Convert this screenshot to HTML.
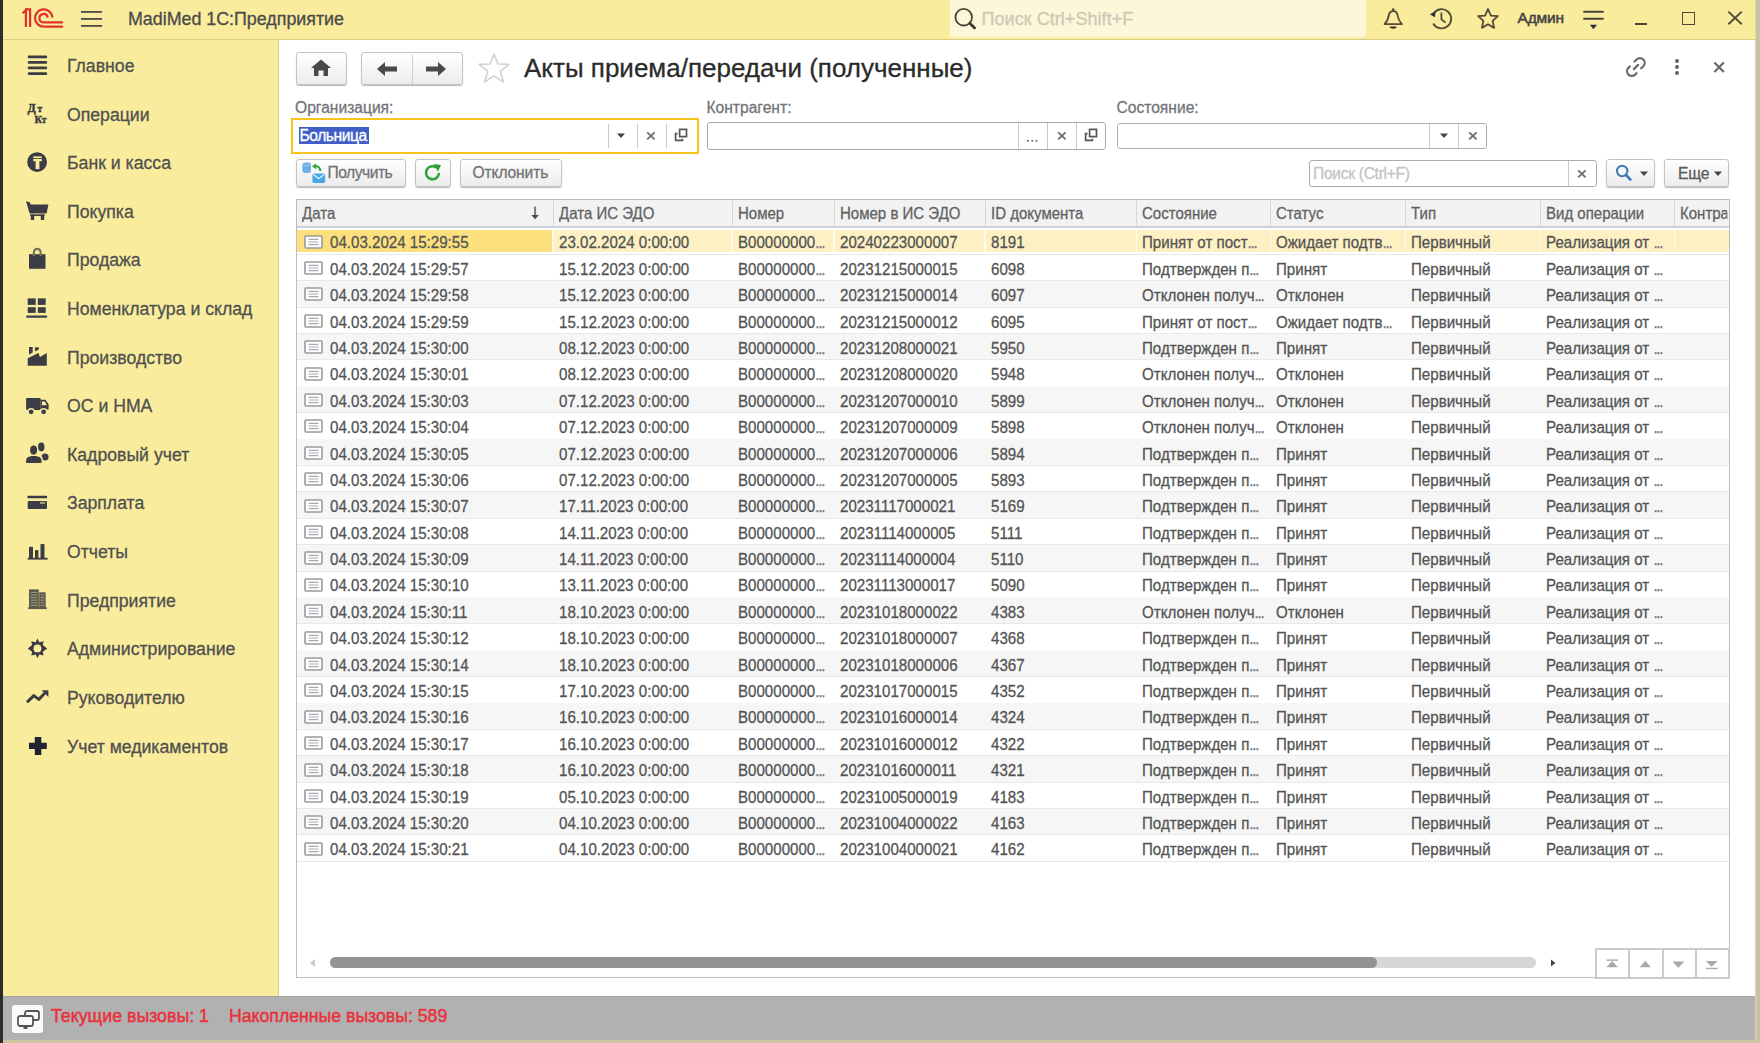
<!DOCTYPE html>
<html><head><meta charset="utf-8"><title>1C</title>
<style>
*{box-sizing:border-box;margin:0;padding:0}
html,body{width:1760px;height:1043px;overflow:hidden;background:#fff;font-family:"Liberation Sans",sans-serif;color:#4a4a4a}
.a{position:absolute}
.t{position:absolute;white-space:nowrap;line-height:1;transform-origin:0 0;-webkit-text-stroke:0.3px currentColor}
.btn{position:absolute;background:linear-gradient(#ffffff,#ececec);border:1px solid #c4c4c4;border-radius:3px;box-shadow:0 1px 1px rgba(0,0,0,0.28)}
.fld{position:absolute;background:#fff;border:1px solid #acacac;border-radius:3px}
.vs{position:absolute;top:2px;bottom:2px;width:1px;background:#c9c9c9}
</style></head><body>

<div class="a" style="left:0;top:0;width:3px;height:1043px;background:#2c2c30"></div>
<div class="a" style="left:1755px;top:0;width:5px;height:1043px;background:linear-gradient(90deg,#e6dcae 0,#cdc592 30%,#c6bfab 60%,#c7c0ae 100%)"></div>
<div class="a" style="left:3px;top:0;width:1752px;height:40px;background:#f9ec9c;border-bottom:1.5px solid #d9cd86"></div>
<svg class="a" style="left:0;top:0;overflow:visible" width="1" height="1"><g fill="none" stroke="#e2302a" stroke-width="2.2"><path d="M22.6 13.2 L25.9 10 V27.1"/><path d="M25 9.4 H30.1 V27.1"/><path d="M52.3 16.6 A8.7 8.7 0 1 0 43.9 26.7 H62.2" stroke-linecap="round"/><path d="M47.6 16.8 A4.2 4.2 0 1 0 43.4 22.4 H62.2" stroke-linecap="round"/></g></svg>
<svg class="a" style="left:81px;top:10px" width="22" height="18" viewBox="0 0 22 18"><g fill="#4b4b4b"><rect x="0" y="1" width="21" height="1.8"/><rect x="0" y="8" width="21" height="1.8"/><rect x="0" y="15" width="21" height="1.8"/></g></svg>
<div class="t" style="left:128.2px;top:9.55px;font-size:18.5px;transform:scaleX(0.964);color:#4a4a4a;">MadiMed 1С:Предприятие</div>
<div class="a" style="left:950px;top:0px;width:416px;height:37px;background:#fdf6d8;border-radius:0 0 2px 2px"></div>
<svg class="a" style="left:953px;top:6px" width="26" height="26" viewBox="0 0 26 26"><circle cx="10.7" cy="11.2" r="8.3" fill="none" stroke="#4a4739" stroke-width="1.8"/><path d="M16.8 17.3 L21.6 21.9" stroke="#3b3b33" stroke-width="2.8" stroke-linecap="round"/></svg>
<div class="t" style="left:981.5px;top:9.77px;font-size:18px;letter-spacing:0.05px;color:#cdc9b6;">Поиск Ctrl+Shift+F</div>
<svg class="a" style="left:1380px;top:2px" width="28" height="32" viewBox="0 0 28 32"><circle cx="13.2" cy="7.6" r="1.3" fill="#4f4a3a"/><path d="M4.5 22.1 C7 19.5 8.3 17 8.8 13.5 C9.2 10.5 10.5 9.2 13.2 9.2 C15.9 9.2 17.2 10.5 17.6 13.5 C18.1 17 19.4 19.5 21.9 22.1 Z" fill="none" stroke="#4f4a3a" stroke-width="1.8" stroke-linejoin="round"/><path d="M9.8 24.6 H16.6 A3.4 2.2 0 0 1 9.8 24.6 Z" fill="#3a3528"/></svg>
<svg class="a" style="left:1425px;top:0px" width="34" height="36" viewBox="0 0 34 36"><path d="M8.6 13.4 A9.6 9.6 0 1 1 8.2 23.5" fill="none" stroke="#524c3a" stroke-width="1.8"/><path d="M4.8 14.3 L10.6 11.6 L9.9 17.2 Z" fill="#2f2f3a"/><path d="M16.4 12.4 V19.3 L20.6 22.6" fill="none" stroke="#524c3a" stroke-width="1.8"/></svg>
<svg class="a" style="left:1476px;top:7px" width="24" height="24" viewBox="0 0 24 24"><path d="M12 2 L14.9 8.6 L21.8 9.2 L16.6 13.9 L18.1 20.9 L12 17.3 L5.9 20.9 L7.4 13.9 L2.2 9.2 L9.1 8.6 Z" fill="none" stroke="#4f4a3a" stroke-width="1.8" stroke-linejoin="round"/></svg>
<div class="t" style="left:1517.5px;top:10.09px;font-size:15.5px;letter-spacing:-0.2px;color:#444;-webkit-text-stroke:0.55px #444">Админ</div>
<svg class="a" style="left:1580px;top:0px" width="30" height="34" viewBox="0 0 30 34"><g stroke="#4a4536" stroke-width="1.9" stroke-linecap="round"><path d="M4 11.8H23M4 18.7H23"/></g><path d="M9.8 24.8h7.2l-3.6 4.4z" fill="#2e2e36"/></svg>
<div class="a" style="left:1634.8px;top:23.3px;width:12.6px;height:2px;background:#4f4a3a"></div>
<div class="a" style="left:1682px;top:12.3px;width:12.8px;height:12.4px;border:1.9px solid #4f4a3a"></div>
<svg class="a" style="left:1726px;top:9px" width="18" height="18" viewBox="0 0 18 18"><path d="M2.3 2.6L15.8 15.2M15.8 2.6L2.3 15.2" stroke="#4f4a3a" stroke-width="1.9"/></svg>
<div class="a" style="left:3px;top:40px;width:276px;height:956px;background:#f9ec9c;border-right:1.6px solid #dcd08a"></div>
<svg class="a" style="left:20px;top:45px" width="40" height="40" viewBox="0 0 40 40"><g fill="#3c3c44"><rect x="7.7" y="10.6" width="19.5" height="2.7" rx="1.3"/><rect x="7.7" y="16.1" width="19.5" height="2.7" rx="1.3"/><rect x="7.7" y="21.6" width="19.5" height="2.7" rx="1.3"/><rect x="7.7" y="27.2" width="19.5" height="2.7" rx="1.3"/></g></svg>
<svg class="a" style="left:20px;top:94px" width="40" height="40" viewBox="0 0 40 40"><g fill="#3c3c44" stroke="#3c3c44" stroke-width="0.45" font-family="Liberation Serif" font-weight="bold"><text x="7.6" y="18.4" font-size="12">Д</text><text x="17.6" y="17.8" font-size="9.5">т</text><text x="14.6" y="28.8" font-size="10.5">К</text><text x="21.8" y="28.8" font-size="9.5">т</text></g></svg>
<svg class="a" style="left:20px;top:142px" width="40" height="40" viewBox="0 0 40 40"><circle cx="17.1" cy="20.1" r="9.9" fill="#3c3c44"/><g fill="#f9ec9c"><rect x="13.2" y="14.4" width="8.6" height="1.6"/><rect x="13.2" y="16.9" width="8.6" height="2.3"/><rect x="15.6" y="16.9" width="3.8" height="10.2"/></g></svg>
<svg class="a" style="left:20px;top:190px" width="40" height="40" viewBox="0 0 40 40"><g fill="#3c3c44"><path d="M6 11.3 L9.8 12.2 L10.6 14.4 H28.4 L26.6 23.4 H9.6 Z"/><rect x="10.2" y="24.4" width="14.4" height="1.6"/><rect x="10.8" y="24.4" width="3.4" height="5.5" rx="0.6"/><rect x="20.8" y="24.4" width="3.4" height="5.5" rx="0.6"/></g></svg>
<svg class="a" style="left:20px;top:240px" width="40" height="40" viewBox="0 0 40 40"><g fill="#3c3c44"><path d="M9 14.2 H25.5 V28.8 H9 Z"/></g><path d="M13.9 16 V12.2 A3.35 3.35 0 0 1 20.6 12.2 V16" fill="none" stroke="#77725c" stroke-width="2.2"/></svg>
<svg class="a" style="left:20px;top:288px" width="40" height="40" viewBox="0 0 40 40"><g fill="#3c3c44"><rect x="7.7" y="10.4" width="8" height="6.5"/><rect x="17.8" y="10.4" width="7.9" height="6.5"/><rect x="7.7" y="19.2" width="8" height="5.7"/><rect x="17.8" y="19.2" width="7.9" height="5.7"/><rect x="6.1" y="27.4" width="21.1" height="2.3" rx="1"/></g></svg>
<svg class="a" style="left:20px;top:337px" width="40" height="40" viewBox="0 0 40 40"><g fill="#3c3c44"><path d="M9 10 H12.7 V15.6 L9 17.4 Z"/><path d="M15 10.2 H18.8 V12.6 L15 14.5 Z"/><path d="M7.7 21.3 L18.4 16.1 L20 19.9 L26.8 16.1 V28.8 H7.7 Z"/></g></svg>
<svg class="a" style="left:20px;top:385px" width="40" height="40" viewBox="0 0 40 40"><g fill="#3c3c44"><rect x="6.1" y="13" width="14.6" height="11.9" rx="0.8"/><path d="M20.7 14.8 H25.5 L28.6 19.5 V24.6 H20.7 Z"/></g><path d="M21.9 16.5 H25 L26.8 20.3 H21.9 Z" fill="#f9ec9c"/><g><circle cx="11.1" cy="26.8" r="3.7" fill="#f9ec9c"/><circle cx="23.6" cy="26.8" r="3.7" fill="#f9ec9c"/><circle cx="11.1" cy="26.8" r="2.4" fill="#3c3c44"/><circle cx="23.6" cy="26.8" r="2.4" fill="#3c3c44"/></g></svg>
<svg class="a" style="left:20px;top:434px" width="40" height="40" viewBox="0 0 40 40"><g fill="#3c3c44"><ellipse cx="21.3" cy="13" rx="3.2" ry="4.4"/><ellipse cx="25" cy="23" rx="3.6" ry="3.6"/></g><g fill="#f9ec9c"><ellipse cx="13.6" cy="16.1" rx="4.7" ry="5.8"/><path d="M4.5 30 V26 C4.5 22 8 20.5 13.8 20.5 C19.5 20.5 23 22 23 26 V30 Z"/></g><g fill="#3c3c44"><ellipse cx="13.6" cy="16.1" rx="3.5" ry="4.6"/><path d="M6.1 29.1 V26.5 C6.1 23.6 9 22.1 13.8 22.1 C18.6 22.1 21.5 23.6 21.5 26.5 V29.1 Z"/></g></svg>
<svg class="a" style="left:20px;top:483px" width="40" height="40" viewBox="0 0 40 40"><g fill="#3c3c44"><rect x="7.3" y="12.7" width="19.9" height="2.6" rx="1"/><rect x="7.7" y="18" width="19.3" height="8.1" rx="1"/></g><rect x="19.9" y="18.8" width="5.4" height="2.3" rx="0.8" fill="#9d9a78"/></svg>
<svg class="a" style="left:20px;top:531px" width="40" height="40" viewBox="0 0 40 40"><g fill="#3c3c44"><rect x="9" y="15.7" width="4" height="12" rx="0.8"/><rect x="15" y="19" width="3.4" height="8.7" rx="0.8"/><rect x="20.5" y="13" width="4" height="14.7" rx="0.8"/><rect x="7.7" y="26.8" width="19.9" height="1.8"/></g></svg>
<svg class="a" style="left:20px;top:580px" width="40" height="40" viewBox="0 0 40 40"><g fill="#5c5a4e"><rect x="9" y="9.4" width="9.8" height="19"/><rect x="19.2" y="12.3" width="6.5" height="16.1"/><rect x="8.2" y="27.2" width="18.6" height="1.9"/></g><g stroke="#a8a37c" stroke-width="0.9"><path d="M10.6 12.4H17.2M10.6 15H17.2M10.6 17.6H17.2M10.6 20.2H17.2M10.6 22.8H17.2M10.6 25.4H17.2M20.6 15H24.3M20.6 17.6H24.3M20.6 20.2H24.3M20.6 22.8H24.3M20.6 25.4H24.3"/></g></svg>
<svg class="a" style="left:20px;top:629px" width="40" height="40" viewBox="0 0 40 40"><g fill="#3c3c44"><path d="M17.45 9.6 L19.3 13.2 L23.6 12.2 L22.8 16.1 L27.2 19.4 L22.8 22.7 L23.6 26.6 L19.3 25.6 L17.45 29.2 L15.6 25.6 L11.3 26.6 L12.1 22.7 L7.7 19.4 L12.1 16.1 L11.3 12.2 L15.6 13.2 Z"/></g><circle cx="17.45" cy="19.4" r="3.9" fill="#f9ec9c"/></svg>
<svg class="a" style="left:20px;top:677px" width="40" height="40" viewBox="0 0 40 40"><path d="M7.9 24.4 L13.8 18.6 L18.8 22.4 L24.2 16.8" fill="none" stroke="#3c3c44" stroke-width="3" stroke-linecap="round" stroke-linejoin="round"/><path d="M21.6 13.2 H28.4 V20 Z" fill="#3c3c44"/></svg>
<svg class="a" style="left:20px;top:726px" width="40" height="40" viewBox="0 0 40 40"><path fill="#1f2430" d="M14.8 11.1 H21.3 V16.7 H26.8 V23 H21.3 V29.1 H14.8 V23 H9 V16.7 H14.8 Z"/></svg>
<div class="t" style="left:67px;top:56.90px;font-size:18.8px;transform:scaleX(0.94);color:#505050;">Главное</div>
<div class="t" style="left:67px;top:105.52px;font-size:18.8px;transform:scaleX(0.94);color:#505050;">Операции</div>
<div class="t" style="left:67px;top:154.14px;font-size:18.8px;transform:scaleX(0.94);color:#505050;">Банк и касса</div>
<div class="t" style="left:67px;top:202.76px;font-size:18.8px;transform:scaleX(0.94);color:#505050;">Покупка</div>
<div class="t" style="left:67px;top:251.38px;font-size:18.8px;transform:scaleX(0.94);color:#505050;">Продажа</div>
<div class="t" style="left:67px;top:300.00px;font-size:18.8px;transform:scaleX(0.94);color:#505050;">Номенклатура и склад</div>
<div class="t" style="left:67px;top:348.62px;font-size:18.8px;transform:scaleX(0.94);color:#505050;">Производство</div>
<div class="t" style="left:67px;top:397.24px;font-size:18.8px;transform:scaleX(0.94);color:#505050;">ОС и НМА</div>
<div class="t" style="left:67px;top:445.86px;font-size:18.8px;transform:scaleX(0.94);color:#505050;">Кадровый учет</div>
<div class="t" style="left:67px;top:494.48px;font-size:18.8px;transform:scaleX(0.94);color:#505050;">Зарплата</div>
<div class="t" style="left:67px;top:543.10px;font-size:18.8px;transform:scaleX(0.94);color:#505050;">Отчеты</div>
<div class="t" style="left:67px;top:591.72px;font-size:18.8px;transform:scaleX(0.94);color:#505050;">Предприятие</div>
<div class="t" style="left:67px;top:640.34px;font-size:18.8px;transform:scaleX(0.94);color:#505050;">Администрирование</div>
<div class="t" style="left:67px;top:688.96px;font-size:18.8px;transform:scaleX(0.94);color:#505050;">Руководителю</div>
<div class="t" style="left:67px;top:737.58px;font-size:18.8px;transform:scaleX(0.94);color:#505050;">Учет медикаментов</div>
<div class="btn" style="left:296px;top:52px;width:51px;height:33px"></div>
<svg class="a" style="left:309px;top:58px" width="24" height="20" viewBox="0 0 24 20"><path d="M12 1.5 L22 10 H19 V18 H14.5 V12.5 H9.5 V18 H5 V10 H2 Z" fill="#4a4a4a"/></svg>
<div class="btn" style="left:361px;top:52px;width:102px;height:33px"></div>
<div class="a" style="left:412px;top:54px;width:1px;height:30px;background:#d0d0d0"></div>
<svg class="a" style="left:375px;top:59px" width="24" height="20" viewBox="0 0 24 20"><path d="M2 10 L10 3 V7.5 H22 V12.5 H10 V17 Z" fill="#4a4a4a"/></svg>
<svg class="a" style="left:424px;top:59px" width="24" height="20" viewBox="0 0 24 20"><path d="M22 10 L14 3 V7.5 H2 V12.5 H14 V17 Z" fill="#4a4a4a"/></svg>
<svg class="a" style="left:477px;top:52px" width="34" height="32" viewBox="0 0 34 32"><path d="M17 2 L21 12 L32 12.4 L23.3 19.2 L26.4 30 L17 23.8 L7.6 30 L10.7 19.2 L2 12.4 L13 12 Z" fill="none" stroke="#d2d2d2" stroke-width="1.6" stroke-linejoin="round"/></svg>
<div class="t" style="left:524px;top:55.40px;font-size:26px;color:#2b2b2b;">Акты приема/передачи (полученные)</div>
<svg class="a" style="left:0;top:0;overflow:visible" width="1" height="1"><g transform="translate(1636,67) rotate(45)" fill="none" stroke="#6b6b6b" stroke-width="2.2" stroke-linecap="round"><path d="M-4.9 -2.75 V-5.75 A4.75 4.75 0 0 1 4.6 -5.75 V-2.75"/><path d="M-4.75 4 V6 A4.75 4.75 0 0 0 4.75 6 V4"/><path d="M0 -3 V3"/></g></svg>
<div class="a" style="left:1675.2px;top:59.3px;width:3.8px;height:3.8px;border-radius:50%;background:#666"></div>
<div class="a" style="left:1675.2px;top:65.2px;width:3.8px;height:3.8px;border-radius:50%;background:#666"></div>
<div class="a" style="left:1675.2px;top:71.1px;width:3.8px;height:3.8px;border-radius:50%;background:#666"></div>
<svg class="a" style="left:1712px;top:60px" width="14" height="14" viewBox="0 0 14 14"><path d="M2.4 2.6L11.8 12M11.8 2.6L2.4 12" stroke="#666" stroke-width="2.1"/></svg>
<div class="t" style="left:295px;top:100.30px;font-size:15.6px;color:#747478;">Организация:</div>
<div class="t" style="left:706.5px;top:100.30px;font-size:15.6px;color:#747478;">Контрагент:</div>
<div class="t" style="left:1116.5px;top:100.30px;font-size:15.6px;color:#747478;">Состояние:</div>
<div class="a" style="left:291px;top:118px;width:408px;height:36px;border:2.5px solid #f6c51a;background:#fff"></div>
<div class="a" style="left:299px;top:127px;width:70px;height:17px;background:#3f5fc6"></div>
<div class="t" style="left:299.5px;top:127.80px;font-size:15.6px;letter-spacing:-0.43px;color:#fff;">Больница</div>
<div class="a" style="left:607.5px;top:124px;width:1px;height:24px;background:#c9c9c9"></div>
<div class="a" style="left:636.5px;top:124px;width:1px;height:24px;background:#c9c9c9"></div>
<div class="a" style="left:665.5px;top:124px;width:1px;height:24px;background:#c9c9c9"></div>
<div class="a" style="left:616.0px;top:133.0px;width:10px;height:6px;line-height:0"><svg width="10" height="6" viewBox="0 0 10 6"><path d="M1 0.5h8L5 5z" fill="#444"/></svg></div>
<div class="a" style="left:644.5px;top:130.0px;width:12px;height:12px;line-height:0"><svg width="12" height="12" viewBox="0 0 12 12"><path d="M2.2 2.4L9.6 9.4M9.6 2.4L2.2 9.4" stroke="#6f6f6f" stroke-width="1.9"/></svg></div>
<div class="a" style="left:673.0px;top:127.0px;width:16px;height:16px;line-height:0"><svg width="16" height="16" viewBox="0 0 16 16"><g fill="none" stroke="#555" stroke-width="1.7"><rect x="6.6" y="2.4" width="6.9" height="7.2"/><path d="M4.6 6.6H2.6v6.8h6.8v-1.6"/></g></svg></div>
<div class="fld" style="left:707px;top:122px;width:399px;height:28px"></div>
<div class="a" style="left:1018px;top:123px;width:1px;height:26px;background:#c9c9c9"></div>
<div class="a" style="left:1047px;top:123px;width:1px;height:26px;background:#c9c9c9"></div>
<div class="a" style="left:1076px;top:123px;width:1px;height:26px;background:#c9c9c9"></div>
<svg class="a" style="left:0;top:0;overflow:visible" width="1" height="1"><g fill="#6a6a6a"><circle cx="1028" cy="140.8" r="1.05"/><circle cx="1032.2" cy="140.8" r="1.05"/><circle cx="1036.4" cy="140.8" r="1.05"/></g></svg>
<div class="a" style="left:1055.5px;top:130.0px;width:12px;height:12px;line-height:0"><svg width="12" height="12" viewBox="0 0 12 12"><path d="M2.2 2.4L9.6 9.4M9.6 2.4L2.2 9.4" stroke="#6f6f6f" stroke-width="1.9"/></svg></div>
<div class="a" style="left:1083.0px;top:127.0px;width:16px;height:16px;line-height:0"><svg width="16" height="16" viewBox="0 0 16 16"><g fill="none" stroke="#555" stroke-width="1.7"><rect x="6.6" y="2.4" width="6.9" height="7.2"/><path d="M4.6 6.6H2.6v6.8h6.8v-1.6"/></g></svg></div>
<div class="fld" style="left:1117px;top:123px;width:370px;height:26px"></div>
<div class="a" style="left:1429px;top:124px;width:1px;height:24px;background:#c9c9c9"></div>
<div class="a" style="left:1458px;top:124px;width:1px;height:24px;background:#c9c9c9"></div>
<div class="a" style="left:1438.5px;top:133.0px;width:10px;height:6px;line-height:0"><svg width="10" height="6" viewBox="0 0 10 6"><path d="M1 0.5h8L5 5z" fill="#444"/></svg></div>
<div class="a" style="left:1466.5px;top:130.0px;width:12px;height:12px;line-height:0"><svg width="12" height="12" viewBox="0 0 12 12"><path d="M2.2 2.4L9.6 9.4M9.6 2.4L2.2 9.4" stroke="#6f6f6f" stroke-width="1.9"/></svg></div>
<div class="btn" style="left:296px;top:159px;width:110px;height:28px"></div>
<svg class="a" style="left:296px;top:156px" width="34" height="32" viewBox="0 0 34 32"><rect x="6.4" y="6.4" width="8.6" height="10.6" rx="2.8" fill="#6fb0e8"/><path d="M7.2 8.8 Q10.7 10.6 14.2 8.8" fill="none" stroke="#a8d2f4" stroke-width="0.8"/><path d="M18.6 10.4 Q23.5 9.2 24.5 15" fill="none" stroke="#2fa63a" stroke-width="2"/><path d="M16 10.3 L20 7.4 L20.2 13.2 Z" fill="#2fa63a"/><rect x="16.4" y="17.6" width="12.8" height="9.3" rx="1.6" fill="#4aa8e6"/><path d="M17.2 18.6 L22.8 22.6 L28.4 18.6" fill="none" stroke="#e6f4fd" stroke-width="1.2"/></svg>
<div class="t" style="left:327.5px;top:165.40px;font-size:15.6px;letter-spacing:-0.47px;color:#737373;">Получить</div>
<div class="btn" style="left:415px;top:159px;width:36px;height:28px"></div>
<svg class="a" style="left:422px;top:163px" width="22" height="20" viewBox="0 0 22 20"><path d="M17 10 A6.5 6.5 0 1 1 14 4.3" fill="none" stroke="#2ea23a" stroke-width="2.6"/><path d="M11.5 1 L19 2 L16 8.5z" fill="#2ea23a"/></svg>
<div class="btn" style="left:460px;top:159px;width:102px;height:28px"></div>
<div class="t" style="left:472.5px;top:165.40px;font-size:15.6px;letter-spacing:-0.12px;color:#737373;">Отклонить</div>
<div class="fld" style="left:1309px;top:160px;width:288px;height:27px"></div>
<div class="a" style="left:1567.5px;top:161px;width:1px;height:25px;background:#c9c9c9"></div>
<div class="t" style="left:1313px;top:165.80px;font-size:15.6px;letter-spacing:-0.3px;color:#c4c4c4;">Поиск (Ctrl+F)</div>
<div class="a" style="left:1575.5px;top:167.5px;width:12px;height:12px;line-height:0"><svg width="12" height="12" viewBox="0 0 12 12"><path d="M2.2 2.4L9.6 9.4M9.6 2.4L2.2 9.4" stroke="#6f6f6f" stroke-width="1.9"/></svg></div>
<div class="btn" style="left:1606px;top:159px;width:49px;height:28px"></div>
<svg class="a" style="left:1614px;top:163px" width="20" height="20" viewBox="0 0 20 20"><circle cx="8.2" cy="8" r="5.2" fill="none" stroke="#3b78b4" stroke-width="2"/><path d="M12 12 L16.4 16.6" stroke="#3b78b4" stroke-width="2.6" stroke-linecap="round"/></svg>
<div class="a" style="left:1638.5px;top:170.5px;width:10px;height:6px;line-height:0"><svg width="10" height="6" viewBox="0 0 10 6"><path d="M1 0.5h8L5 5z" fill="#444"/></svg></div>
<div class="btn" style="left:1664px;top:159px;width:65px;height:28px"></div>
<div class="t" style="left:1678px;top:165.80px;font-size:15.6px;letter-spacing:-0.2px;color:#5a5a5a;">Еще</div>
<div class="a" style="left:1712.5px;top:170.5px;width:10px;height:6px;line-height:0"><svg width="10" height="6" viewBox="0 0 10 6"><path d="M1 0.5h8L5 5z" fill="#444"/></svg></div>
<div class="a" style="left:296px;top:199px;width:1434px;height:779px;border:1px solid #bdbdbd;background:#fff"></div>
<div class="a" style="left:297px;top:200px;width:1432px;height:28px;background:#f2f2f2;border-bottom:2px solid #cdd0d6"></div>
<div class="a" style="left:552.5px;top:201px;width:1px;height:26px;background:#d6d6d6"></div>
<div class="a" style="left:731.5px;top:201px;width:1px;height:26px;background:#d6d6d6"></div>
<div class="a" style="left:833.5px;top:201px;width:1px;height:26px;background:#d6d6d6"></div>
<div class="a" style="left:984.5px;top:201px;width:1px;height:26px;background:#d6d6d6"></div>
<div class="a" style="left:1136px;top:201px;width:1px;height:26px;background:#d6d6d6"></div>
<div class="a" style="left:1270px;top:201px;width:1px;height:26px;background:#d6d6d6"></div>
<div class="a" style="left:1405px;top:201px;width:1px;height:26px;background:#d6d6d6"></div>
<div class="a" style="left:1540px;top:201px;width:1px;height:26px;background:#d6d6d6"></div>
<div class="a" style="left:1674px;top:201px;width:1px;height:26px;background:#d6d6d6"></div>
<div class="t" style="left:302px;top:205.24px;font-size:16.5px;transform:scaleX(0.91);color:#626262;width:273.1px;overflow:hidden">Дата</div>
<div class="t" style="left:558.5px;top:205.24px;font-size:16.5px;transform:scaleX(0.91);color:#626262;width:187.9px;overflow:hidden">Дата ИС ЭДО</div>
<div class="t" style="left:737.5px;top:205.24px;font-size:16.5px;transform:scaleX(0.91);color:#626262;width:103.3px;overflow:hidden">Номер</div>
<div class="t" style="left:839.5px;top:205.24px;font-size:16.5px;transform:scaleX(0.91);color:#626262;width:157.1px;overflow:hidden">Номер в ИС ЭДО</div>
<div class="t" style="left:990.5px;top:205.24px;font-size:16.5px;transform:scaleX(0.91);color:#626262;width:157.7px;overflow:hidden">ID документа</div>
<div class="t" style="left:1142px;top:205.24px;font-size:16.5px;transform:scaleX(0.91);color:#626262;width:138.5px;overflow:hidden">Состояние</div>
<div class="t" style="left:1276px;top:205.24px;font-size:16.5px;transform:scaleX(0.91);color:#626262;width:139.6px;overflow:hidden">Статус</div>
<div class="t" style="left:1411px;top:205.24px;font-size:16.5px;transform:scaleX(0.91);color:#626262;width:139.6px;overflow:hidden">Тип</div>
<div class="t" style="left:1546px;top:205.24px;font-size:16.5px;transform:scaleX(0.91);color:#626262;width:138.5px;overflow:hidden">Вид операции</div>
<div class="t" style="left:1680px;top:205.24px;font-size:16.5px;transform:scaleX(0.91);color:#626262;width:51.6px;overflow:hidden">Контрагент</div>
<svg class="a" style="left:528px;top:204px" width="14" height="18" viewBox="0 0 14 18"><rect x="6.1" y="2.5" width="2" height="9.5" fill="#7a7a7a"/><path d="M3.4 11 H10.9 L7.1 15.2 Z" fill="#4a4a4a"/></svg>
<div class="a" style="left:297px;top:230px;width:1432px;height:22px;background:#fdf1c3"></div>
<div class="a" style="left:297px;top:230px;width:255.5px;height:22px;background:#fde07e"></div>
<div class="a" style="left:552.0px;top:230px;width:1.6px;height:22px;background:#fffaf0"></div>
<div class="a" style="left:731.0px;top:230px;width:1.6px;height:22px;background:#fffaf0"></div>
<div class="a" style="left:833.0px;top:230px;width:1.6px;height:22px;background:#fffaf0"></div>
<div class="a" style="left:984.0px;top:230px;width:1.6px;height:22px;background:#fffaf0"></div>
<div class="a" style="left:1135.5px;top:230px;width:1.6px;height:22px;background:#fffaf0"></div>
<div class="a" style="left:1269.5px;top:230px;width:1.6px;height:22px;background:#fffaf0"></div>
<div class="a" style="left:1404.5px;top:230px;width:1.6px;height:22px;background:#fffaf0"></div>
<div class="a" style="left:1539.5px;top:230px;width:1.6px;height:22px;background:#fffaf0"></div>
<div class="a" style="left:1673.5px;top:230px;width:1.6px;height:22px;background:#fffaf0"></div>
<div class="a" style="left:297px;top:253.89px;width:1432px;height:1px;background:#e8e8e8"></div>
<div class="a" style="left:304px;top:234.69px;width:19px;height:14px;line-height:0"><svg width="19" height="14" viewBox="0 0 19 14"><rect x="1" y="1" width="17" height="12" rx="1" fill="#fff" stroke="#9a9a9a" stroke-width="1.6"/><path d="M4.5 4.3h10M4.5 7h10M4.5 9.7h10" stroke="#a6aab4" stroke-width="1.2"/></svg></div>
<div class="t" style="left:329.5px;top:235.39px;font-size:16.8px;transform:scaleX(0.9);color:#545454;">04.03.2024 15:29:55</div>
<div class="t" style="left:558.5px;top:235.39px;font-size:16.8px;transform:scaleX(0.9);color:#545454;">23.02.2024 0:00:00</div>
<div class="t" style="left:737.5px;top:235.39px;font-size:16.8px;transform:scaleX(0.9);color:#545454;">B00000000<span style="letter-spacing:-1.4px;color:#777">...</span></div>
<div class="t" style="left:839.5px;top:235.39px;font-size:16.8px;transform:scaleX(0.9);color:#545454;">20240223000007</div>
<div class="t" style="left:990.5px;top:235.39px;font-size:16.8px;transform:scaleX(0.9);color:#545454;">8191</div>
<div class="t" style="left:1142px;top:235.39px;font-size:16.8px;transform:scaleX(0.9);color:#545454;">Принят от пост<span style="letter-spacing:-1.4px;color:#777">...</span></div>
<div class="t" style="left:1276px;top:235.39px;font-size:16.8px;transform:scaleX(0.9);color:#545454;">Ожидает подтв<span style="letter-spacing:-1.4px;color:#777">...</span></div>
<div class="t" style="left:1411px;top:235.39px;font-size:16.8px;transform:scaleX(0.9);color:#545454;">Первичный</div>
<div class="t" style="left:1546px;top:235.39px;font-size:16.8px;transform:scaleX(0.9);color:#545454;">Реализация от <span style="letter-spacing:-1.4px;color:#777">...</span></div>
<div class="a" style="left:297px;top:280.28px;width:1432px;height:1px;background:#e8e8e8"></div>
<div class="a" style="left:304px;top:261.08px;width:19px;height:14px;line-height:0"><svg width="19" height="14" viewBox="0 0 19 14"><rect x="1" y="1" width="17" height="12" rx="1" fill="#fff" stroke="#9a9a9a" stroke-width="1.6"/><path d="M4.5 4.3h10M4.5 7h10M4.5 9.7h10" stroke="#a6aab4" stroke-width="1.2"/></svg></div>
<div class="t" style="left:329.5px;top:261.78px;font-size:16.8px;transform:scaleX(0.9);color:#545454;">04.03.2024 15:29:57</div>
<div class="t" style="left:558.5px;top:261.78px;font-size:16.8px;transform:scaleX(0.9);color:#545454;">15.12.2023 0:00:00</div>
<div class="t" style="left:737.5px;top:261.78px;font-size:16.8px;transform:scaleX(0.9);color:#545454;">B00000000<span style="letter-spacing:-1.4px;color:#777">...</span></div>
<div class="t" style="left:839.5px;top:261.78px;font-size:16.8px;transform:scaleX(0.9);color:#545454;">20231215000015</div>
<div class="t" style="left:990.5px;top:261.78px;font-size:16.8px;transform:scaleX(0.9);color:#545454;">6098</div>
<div class="t" style="left:1142px;top:261.78px;font-size:16.8px;transform:scaleX(0.9);color:#545454;">Подтвержден п<span style="letter-spacing:-1.4px;color:#777">...</span></div>
<div class="t" style="left:1276px;top:261.78px;font-size:16.8px;transform:scaleX(0.9);color:#545454;">Принят</div>
<div class="t" style="left:1411px;top:261.78px;font-size:16.8px;transform:scaleX(0.9);color:#545454;">Первичный</div>
<div class="t" style="left:1546px;top:261.78px;font-size:16.8px;transform:scaleX(0.9);color:#545454;">Реализация от <span style="letter-spacing:-1.4px;color:#777">...</span></div>
<div class="a" style="left:297px;top:280.78px;width:1432px;height:26.39px;background:#f6f6f6"></div>
<div class="a" style="left:297px;top:306.67px;width:1432px;height:1px;background:#e8e8e8"></div>
<div class="a" style="left:304px;top:287.47px;width:19px;height:14px;line-height:0"><svg width="19" height="14" viewBox="0 0 19 14"><rect x="1" y="1" width="17" height="12" rx="1" fill="#fff" stroke="#9a9a9a" stroke-width="1.6"/><path d="M4.5 4.3h10M4.5 7h10M4.5 9.7h10" stroke="#a6aab4" stroke-width="1.2"/></svg></div>
<div class="t" style="left:329.5px;top:288.17px;font-size:16.8px;transform:scaleX(0.9);color:#545454;">04.03.2024 15:29:58</div>
<div class="t" style="left:558.5px;top:288.17px;font-size:16.8px;transform:scaleX(0.9);color:#545454;">15.12.2023 0:00:00</div>
<div class="t" style="left:737.5px;top:288.17px;font-size:16.8px;transform:scaleX(0.9);color:#545454;">B00000000<span style="letter-spacing:-1.4px;color:#777">...</span></div>
<div class="t" style="left:839.5px;top:288.17px;font-size:16.8px;transform:scaleX(0.9);color:#545454;">20231215000014</div>
<div class="t" style="left:990.5px;top:288.17px;font-size:16.8px;transform:scaleX(0.9);color:#545454;">6097</div>
<div class="t" style="left:1142px;top:288.17px;font-size:16.8px;transform:scaleX(0.9);color:#545454;">Отклонен получ<span style="letter-spacing:-1.4px;color:#777">...</span></div>
<div class="t" style="left:1276px;top:288.17px;font-size:16.8px;transform:scaleX(0.9);color:#545454;">Отклонен</div>
<div class="t" style="left:1411px;top:288.17px;font-size:16.8px;transform:scaleX(0.9);color:#545454;">Первичный</div>
<div class="t" style="left:1546px;top:288.17px;font-size:16.8px;transform:scaleX(0.9);color:#545454;">Реализация от <span style="letter-spacing:-1.4px;color:#777">...</span></div>
<div class="a" style="left:297px;top:333.06px;width:1432px;height:1px;background:#e8e8e8"></div>
<div class="a" style="left:304px;top:313.87px;width:19px;height:14px;line-height:0"><svg width="19" height="14" viewBox="0 0 19 14"><rect x="1" y="1" width="17" height="12" rx="1" fill="#fff" stroke="#9a9a9a" stroke-width="1.6"/><path d="M4.5 4.3h10M4.5 7h10M4.5 9.7h10" stroke="#a6aab4" stroke-width="1.2"/></svg></div>
<div class="t" style="left:329.5px;top:314.56px;font-size:16.8px;transform:scaleX(0.9);color:#545454;">04.03.2024 15:29:59</div>
<div class="t" style="left:558.5px;top:314.56px;font-size:16.8px;transform:scaleX(0.9);color:#545454;">15.12.2023 0:00:00</div>
<div class="t" style="left:737.5px;top:314.56px;font-size:16.8px;transform:scaleX(0.9);color:#545454;">B00000000<span style="letter-spacing:-1.4px;color:#777">...</span></div>
<div class="t" style="left:839.5px;top:314.56px;font-size:16.8px;transform:scaleX(0.9);color:#545454;">20231215000012</div>
<div class="t" style="left:990.5px;top:314.56px;font-size:16.8px;transform:scaleX(0.9);color:#545454;">6095</div>
<div class="t" style="left:1142px;top:314.56px;font-size:16.8px;transform:scaleX(0.9);color:#545454;">Принят от пост<span style="letter-spacing:-1.4px;color:#777">...</span></div>
<div class="t" style="left:1276px;top:314.56px;font-size:16.8px;transform:scaleX(0.9);color:#545454;">Ожидает подтв<span style="letter-spacing:-1.4px;color:#777">...</span></div>
<div class="t" style="left:1411px;top:314.56px;font-size:16.8px;transform:scaleX(0.9);color:#545454;">Первичный</div>
<div class="t" style="left:1546px;top:314.56px;font-size:16.8px;transform:scaleX(0.9);color:#545454;">Реализация от <span style="letter-spacing:-1.4px;color:#777">...</span></div>
<div class="a" style="left:297px;top:333.56px;width:1432px;height:26.39px;background:#f6f6f6"></div>
<div class="a" style="left:297px;top:359.45px;width:1432px;height:1px;background:#e8e8e8"></div>
<div class="a" style="left:304px;top:340.25px;width:19px;height:14px;line-height:0"><svg width="19" height="14" viewBox="0 0 19 14"><rect x="1" y="1" width="17" height="12" rx="1" fill="#fff" stroke="#9a9a9a" stroke-width="1.6"/><path d="M4.5 4.3h10M4.5 7h10M4.5 9.7h10" stroke="#a6aab4" stroke-width="1.2"/></svg></div>
<div class="t" style="left:329.5px;top:340.95px;font-size:16.8px;transform:scaleX(0.9);color:#545454;">04.03.2024 15:30:00</div>
<div class="t" style="left:558.5px;top:340.95px;font-size:16.8px;transform:scaleX(0.9);color:#545454;">08.12.2023 0:00:00</div>
<div class="t" style="left:737.5px;top:340.95px;font-size:16.8px;transform:scaleX(0.9);color:#545454;">B00000000<span style="letter-spacing:-1.4px;color:#777">...</span></div>
<div class="t" style="left:839.5px;top:340.95px;font-size:16.8px;transform:scaleX(0.9);color:#545454;">20231208000021</div>
<div class="t" style="left:990.5px;top:340.95px;font-size:16.8px;transform:scaleX(0.9);color:#545454;">5950</div>
<div class="t" style="left:1142px;top:340.95px;font-size:16.8px;transform:scaleX(0.9);color:#545454;">Подтвержден п<span style="letter-spacing:-1.4px;color:#777">...</span></div>
<div class="t" style="left:1276px;top:340.95px;font-size:16.8px;transform:scaleX(0.9);color:#545454;">Принят</div>
<div class="t" style="left:1411px;top:340.95px;font-size:16.8px;transform:scaleX(0.9);color:#545454;">Первичный</div>
<div class="t" style="left:1546px;top:340.95px;font-size:16.8px;transform:scaleX(0.9);color:#545454;">Реализация от <span style="letter-spacing:-1.4px;color:#777">...</span></div>
<div class="a" style="left:297px;top:385.84px;width:1432px;height:1px;background:#e8e8e8"></div>
<div class="a" style="left:304px;top:366.64px;width:19px;height:14px;line-height:0"><svg width="19" height="14" viewBox="0 0 19 14"><rect x="1" y="1" width="17" height="12" rx="1" fill="#fff" stroke="#9a9a9a" stroke-width="1.6"/><path d="M4.5 4.3h10M4.5 7h10M4.5 9.7h10" stroke="#a6aab4" stroke-width="1.2"/></svg></div>
<div class="t" style="left:329.5px;top:367.34px;font-size:16.8px;transform:scaleX(0.9);color:#545454;">04.03.2024 15:30:01</div>
<div class="t" style="left:558.5px;top:367.34px;font-size:16.8px;transform:scaleX(0.9);color:#545454;">08.12.2023 0:00:00</div>
<div class="t" style="left:737.5px;top:367.34px;font-size:16.8px;transform:scaleX(0.9);color:#545454;">B00000000<span style="letter-spacing:-1.4px;color:#777">...</span></div>
<div class="t" style="left:839.5px;top:367.34px;font-size:16.8px;transform:scaleX(0.9);color:#545454;">20231208000020</div>
<div class="t" style="left:990.5px;top:367.34px;font-size:16.8px;transform:scaleX(0.9);color:#545454;">5948</div>
<div class="t" style="left:1142px;top:367.34px;font-size:16.8px;transform:scaleX(0.9);color:#545454;">Отклонен получ<span style="letter-spacing:-1.4px;color:#777">...</span></div>
<div class="t" style="left:1276px;top:367.34px;font-size:16.8px;transform:scaleX(0.9);color:#545454;">Отклонен</div>
<div class="t" style="left:1411px;top:367.34px;font-size:16.8px;transform:scaleX(0.9);color:#545454;">Первичный</div>
<div class="t" style="left:1546px;top:367.34px;font-size:16.8px;transform:scaleX(0.9);color:#545454;">Реализация от <span style="letter-spacing:-1.4px;color:#777">...</span></div>
<div class="a" style="left:297px;top:386.34px;width:1432px;height:26.39px;background:#f6f6f6"></div>
<div class="a" style="left:297px;top:412.23px;width:1432px;height:1px;background:#e8e8e8"></div>
<div class="a" style="left:304px;top:393.04px;width:19px;height:14px;line-height:0"><svg width="19" height="14" viewBox="0 0 19 14"><rect x="1" y="1" width="17" height="12" rx="1" fill="#fff" stroke="#9a9a9a" stroke-width="1.6"/><path d="M4.5 4.3h10M4.5 7h10M4.5 9.7h10" stroke="#a6aab4" stroke-width="1.2"/></svg></div>
<div class="t" style="left:329.5px;top:393.73px;font-size:16.8px;transform:scaleX(0.9);color:#545454;">04.03.2024 15:30:03</div>
<div class="t" style="left:558.5px;top:393.73px;font-size:16.8px;transform:scaleX(0.9);color:#545454;">07.12.2023 0:00:00</div>
<div class="t" style="left:737.5px;top:393.73px;font-size:16.8px;transform:scaleX(0.9);color:#545454;">B00000000<span style="letter-spacing:-1.4px;color:#777">...</span></div>
<div class="t" style="left:839.5px;top:393.73px;font-size:16.8px;transform:scaleX(0.9);color:#545454;">20231207000010</div>
<div class="t" style="left:990.5px;top:393.73px;font-size:16.8px;transform:scaleX(0.9);color:#545454;">5899</div>
<div class="t" style="left:1142px;top:393.73px;font-size:16.8px;transform:scaleX(0.9);color:#545454;">Отклонен получ<span style="letter-spacing:-1.4px;color:#777">...</span></div>
<div class="t" style="left:1276px;top:393.73px;font-size:16.8px;transform:scaleX(0.9);color:#545454;">Отклонен</div>
<div class="t" style="left:1411px;top:393.73px;font-size:16.8px;transform:scaleX(0.9);color:#545454;">Первичный</div>
<div class="t" style="left:1546px;top:393.73px;font-size:16.8px;transform:scaleX(0.9);color:#545454;">Реализация от <span style="letter-spacing:-1.4px;color:#777">...</span></div>
<div class="a" style="left:297px;top:438.62px;width:1432px;height:1px;background:#e8e8e8"></div>
<div class="a" style="left:304px;top:419.43px;width:19px;height:14px;line-height:0"><svg width="19" height="14" viewBox="0 0 19 14"><rect x="1" y="1" width="17" height="12" rx="1" fill="#fff" stroke="#9a9a9a" stroke-width="1.6"/><path d="M4.5 4.3h10M4.5 7h10M4.5 9.7h10" stroke="#a6aab4" stroke-width="1.2"/></svg></div>
<div class="t" style="left:329.5px;top:420.12px;font-size:16.8px;transform:scaleX(0.9);color:#545454;">04.03.2024 15:30:04</div>
<div class="t" style="left:558.5px;top:420.12px;font-size:16.8px;transform:scaleX(0.9);color:#545454;">07.12.2023 0:00:00</div>
<div class="t" style="left:737.5px;top:420.12px;font-size:16.8px;transform:scaleX(0.9);color:#545454;">B00000000<span style="letter-spacing:-1.4px;color:#777">...</span></div>
<div class="t" style="left:839.5px;top:420.12px;font-size:16.8px;transform:scaleX(0.9);color:#545454;">20231207000009</div>
<div class="t" style="left:990.5px;top:420.12px;font-size:16.8px;transform:scaleX(0.9);color:#545454;">5898</div>
<div class="t" style="left:1142px;top:420.12px;font-size:16.8px;transform:scaleX(0.9);color:#545454;">Отклонен получ<span style="letter-spacing:-1.4px;color:#777">...</span></div>
<div class="t" style="left:1276px;top:420.12px;font-size:16.8px;transform:scaleX(0.9);color:#545454;">Отклонен</div>
<div class="t" style="left:1411px;top:420.12px;font-size:16.8px;transform:scaleX(0.9);color:#545454;">Первичный</div>
<div class="t" style="left:1546px;top:420.12px;font-size:16.8px;transform:scaleX(0.9);color:#545454;">Реализация от <span style="letter-spacing:-1.4px;color:#777">...</span></div>
<div class="a" style="left:297px;top:439.12px;width:1432px;height:26.39px;background:#f6f6f6"></div>
<div class="a" style="left:297px;top:465.01px;width:1432px;height:1px;background:#e8e8e8"></div>
<div class="a" style="left:304px;top:445.81px;width:19px;height:14px;line-height:0"><svg width="19" height="14" viewBox="0 0 19 14"><rect x="1" y="1" width="17" height="12" rx="1" fill="#fff" stroke="#9a9a9a" stroke-width="1.6"/><path d="M4.5 4.3h10M4.5 7h10M4.5 9.7h10" stroke="#a6aab4" stroke-width="1.2"/></svg></div>
<div class="t" style="left:329.5px;top:446.51px;font-size:16.8px;transform:scaleX(0.9);color:#545454;">04.03.2024 15:30:05</div>
<div class="t" style="left:558.5px;top:446.51px;font-size:16.8px;transform:scaleX(0.9);color:#545454;">07.12.2023 0:00:00</div>
<div class="t" style="left:737.5px;top:446.51px;font-size:16.8px;transform:scaleX(0.9);color:#545454;">B00000000<span style="letter-spacing:-1.4px;color:#777">...</span></div>
<div class="t" style="left:839.5px;top:446.51px;font-size:16.8px;transform:scaleX(0.9);color:#545454;">20231207000006</div>
<div class="t" style="left:990.5px;top:446.51px;font-size:16.8px;transform:scaleX(0.9);color:#545454;">5894</div>
<div class="t" style="left:1142px;top:446.51px;font-size:16.8px;transform:scaleX(0.9);color:#545454;">Подтвержден п<span style="letter-spacing:-1.4px;color:#777">...</span></div>
<div class="t" style="left:1276px;top:446.51px;font-size:16.8px;transform:scaleX(0.9);color:#545454;">Принят</div>
<div class="t" style="left:1411px;top:446.51px;font-size:16.8px;transform:scaleX(0.9);color:#545454;">Первичный</div>
<div class="t" style="left:1546px;top:446.51px;font-size:16.8px;transform:scaleX(0.9);color:#545454;">Реализация от <span style="letter-spacing:-1.4px;color:#777">...</span></div>
<div class="a" style="left:297px;top:491.40px;width:1432px;height:1px;background:#e8e8e8"></div>
<div class="a" style="left:304px;top:472.20px;width:19px;height:14px;line-height:0"><svg width="19" height="14" viewBox="0 0 19 14"><rect x="1" y="1" width="17" height="12" rx="1" fill="#fff" stroke="#9a9a9a" stroke-width="1.6"/><path d="M4.5 4.3h10M4.5 7h10M4.5 9.7h10" stroke="#a6aab4" stroke-width="1.2"/></svg></div>
<div class="t" style="left:329.5px;top:472.90px;font-size:16.8px;transform:scaleX(0.9);color:#545454;">04.03.2024 15:30:06</div>
<div class="t" style="left:558.5px;top:472.90px;font-size:16.8px;transform:scaleX(0.9);color:#545454;">07.12.2023 0:00:00</div>
<div class="t" style="left:737.5px;top:472.90px;font-size:16.8px;transform:scaleX(0.9);color:#545454;">B00000000<span style="letter-spacing:-1.4px;color:#777">...</span></div>
<div class="t" style="left:839.5px;top:472.90px;font-size:16.8px;transform:scaleX(0.9);color:#545454;">20231207000005</div>
<div class="t" style="left:990.5px;top:472.90px;font-size:16.8px;transform:scaleX(0.9);color:#545454;">5893</div>
<div class="t" style="left:1142px;top:472.90px;font-size:16.8px;transform:scaleX(0.9);color:#545454;">Подтвержден п<span style="letter-spacing:-1.4px;color:#777">...</span></div>
<div class="t" style="left:1276px;top:472.90px;font-size:16.8px;transform:scaleX(0.9);color:#545454;">Принят</div>
<div class="t" style="left:1411px;top:472.90px;font-size:16.8px;transform:scaleX(0.9);color:#545454;">Первичный</div>
<div class="t" style="left:1546px;top:472.90px;font-size:16.8px;transform:scaleX(0.9);color:#545454;">Реализация от <span style="letter-spacing:-1.4px;color:#777">...</span></div>
<div class="a" style="left:297px;top:491.90px;width:1432px;height:26.39px;background:#f6f6f6"></div>
<div class="a" style="left:297px;top:517.79px;width:1432px;height:1px;background:#e8e8e8"></div>
<div class="a" style="left:304px;top:498.59px;width:19px;height:14px;line-height:0"><svg width="19" height="14" viewBox="0 0 19 14"><rect x="1" y="1" width="17" height="12" rx="1" fill="#fff" stroke="#9a9a9a" stroke-width="1.6"/><path d="M4.5 4.3h10M4.5 7h10M4.5 9.7h10" stroke="#a6aab4" stroke-width="1.2"/></svg></div>
<div class="t" style="left:329.5px;top:499.29px;font-size:16.8px;transform:scaleX(0.9);color:#545454;">04.03.2024 15:30:07</div>
<div class="t" style="left:558.5px;top:499.29px;font-size:16.8px;transform:scaleX(0.9);color:#545454;">17.11.2023 0:00:00</div>
<div class="t" style="left:737.5px;top:499.29px;font-size:16.8px;transform:scaleX(0.9);color:#545454;">B00000000<span style="letter-spacing:-1.4px;color:#777">...</span></div>
<div class="t" style="left:839.5px;top:499.29px;font-size:16.8px;transform:scaleX(0.9);color:#545454;">20231117000021</div>
<div class="t" style="left:990.5px;top:499.29px;font-size:16.8px;transform:scaleX(0.9);color:#545454;">5169</div>
<div class="t" style="left:1142px;top:499.29px;font-size:16.8px;transform:scaleX(0.9);color:#545454;">Подтвержден п<span style="letter-spacing:-1.4px;color:#777">...</span></div>
<div class="t" style="left:1276px;top:499.29px;font-size:16.8px;transform:scaleX(0.9);color:#545454;">Принят</div>
<div class="t" style="left:1411px;top:499.29px;font-size:16.8px;transform:scaleX(0.9);color:#545454;">Первичный</div>
<div class="t" style="left:1546px;top:499.29px;font-size:16.8px;transform:scaleX(0.9);color:#545454;">Реализация от <span style="letter-spacing:-1.4px;color:#777">...</span></div>
<div class="a" style="left:297px;top:544.18px;width:1432px;height:1px;background:#e8e8e8"></div>
<div class="a" style="left:304px;top:524.99px;width:19px;height:14px;line-height:0"><svg width="19" height="14" viewBox="0 0 19 14"><rect x="1" y="1" width="17" height="12" rx="1" fill="#fff" stroke="#9a9a9a" stroke-width="1.6"/><path d="M4.5 4.3h10M4.5 7h10M4.5 9.7h10" stroke="#a6aab4" stroke-width="1.2"/></svg></div>
<div class="t" style="left:329.5px;top:525.68px;font-size:16.8px;transform:scaleX(0.9);color:#545454;">04.03.2024 15:30:08</div>
<div class="t" style="left:558.5px;top:525.68px;font-size:16.8px;transform:scaleX(0.9);color:#545454;">14.11.2023 0:00:00</div>
<div class="t" style="left:737.5px;top:525.68px;font-size:16.8px;transform:scaleX(0.9);color:#545454;">B00000000<span style="letter-spacing:-1.4px;color:#777">...</span></div>
<div class="t" style="left:839.5px;top:525.68px;font-size:16.8px;transform:scaleX(0.9);color:#545454;">20231114000005</div>
<div class="t" style="left:990.5px;top:525.68px;font-size:16.8px;transform:scaleX(0.9);color:#545454;">5111</div>
<div class="t" style="left:1142px;top:525.68px;font-size:16.8px;transform:scaleX(0.9);color:#545454;">Подтвержден п<span style="letter-spacing:-1.4px;color:#777">...</span></div>
<div class="t" style="left:1276px;top:525.68px;font-size:16.8px;transform:scaleX(0.9);color:#545454;">Принят</div>
<div class="t" style="left:1411px;top:525.68px;font-size:16.8px;transform:scaleX(0.9);color:#545454;">Первичный</div>
<div class="t" style="left:1546px;top:525.68px;font-size:16.8px;transform:scaleX(0.9);color:#545454;">Реализация от <span style="letter-spacing:-1.4px;color:#777">...</span></div>
<div class="a" style="left:297px;top:544.68px;width:1432px;height:26.39px;background:#f6f6f6"></div>
<div class="a" style="left:297px;top:570.57px;width:1432px;height:1px;background:#e8e8e8"></div>
<div class="a" style="left:304px;top:551.38px;width:19px;height:14px;line-height:0"><svg width="19" height="14" viewBox="0 0 19 14"><rect x="1" y="1" width="17" height="12" rx="1" fill="#fff" stroke="#9a9a9a" stroke-width="1.6"/><path d="M4.5 4.3h10M4.5 7h10M4.5 9.7h10" stroke="#a6aab4" stroke-width="1.2"/></svg></div>
<div class="t" style="left:329.5px;top:552.07px;font-size:16.8px;transform:scaleX(0.9);color:#545454;">04.03.2024 15:30:09</div>
<div class="t" style="left:558.5px;top:552.07px;font-size:16.8px;transform:scaleX(0.9);color:#545454;">14.11.2023 0:00:00</div>
<div class="t" style="left:737.5px;top:552.07px;font-size:16.8px;transform:scaleX(0.9);color:#545454;">B00000000<span style="letter-spacing:-1.4px;color:#777">...</span></div>
<div class="t" style="left:839.5px;top:552.07px;font-size:16.8px;transform:scaleX(0.9);color:#545454;">20231114000004</div>
<div class="t" style="left:990.5px;top:552.07px;font-size:16.8px;transform:scaleX(0.9);color:#545454;">5110</div>
<div class="t" style="left:1142px;top:552.07px;font-size:16.8px;transform:scaleX(0.9);color:#545454;">Подтвержден п<span style="letter-spacing:-1.4px;color:#777">...</span></div>
<div class="t" style="left:1276px;top:552.07px;font-size:16.8px;transform:scaleX(0.9);color:#545454;">Принят</div>
<div class="t" style="left:1411px;top:552.07px;font-size:16.8px;transform:scaleX(0.9);color:#545454;">Первичный</div>
<div class="t" style="left:1546px;top:552.07px;font-size:16.8px;transform:scaleX(0.9);color:#545454;">Реализация от <span style="letter-spacing:-1.4px;color:#777">...</span></div>
<div class="a" style="left:297px;top:596.96px;width:1432px;height:1px;background:#e8e8e8"></div>
<div class="a" style="left:304px;top:577.76px;width:19px;height:14px;line-height:0"><svg width="19" height="14" viewBox="0 0 19 14"><rect x="1" y="1" width="17" height="12" rx="1" fill="#fff" stroke="#9a9a9a" stroke-width="1.6"/><path d="M4.5 4.3h10M4.5 7h10M4.5 9.7h10" stroke="#a6aab4" stroke-width="1.2"/></svg></div>
<div class="t" style="left:329.5px;top:578.46px;font-size:16.8px;transform:scaleX(0.9);color:#545454;">04.03.2024 15:30:10</div>
<div class="t" style="left:558.5px;top:578.46px;font-size:16.8px;transform:scaleX(0.9);color:#545454;">13.11.2023 0:00:00</div>
<div class="t" style="left:737.5px;top:578.46px;font-size:16.8px;transform:scaleX(0.9);color:#545454;">B00000000<span style="letter-spacing:-1.4px;color:#777">...</span></div>
<div class="t" style="left:839.5px;top:578.46px;font-size:16.8px;transform:scaleX(0.9);color:#545454;">20231113000017</div>
<div class="t" style="left:990.5px;top:578.46px;font-size:16.8px;transform:scaleX(0.9);color:#545454;">5090</div>
<div class="t" style="left:1142px;top:578.46px;font-size:16.8px;transform:scaleX(0.9);color:#545454;">Подтвержден п<span style="letter-spacing:-1.4px;color:#777">...</span></div>
<div class="t" style="left:1276px;top:578.46px;font-size:16.8px;transform:scaleX(0.9);color:#545454;">Принят</div>
<div class="t" style="left:1411px;top:578.46px;font-size:16.8px;transform:scaleX(0.9);color:#545454;">Первичный</div>
<div class="t" style="left:1546px;top:578.46px;font-size:16.8px;transform:scaleX(0.9);color:#545454;">Реализация от <span style="letter-spacing:-1.4px;color:#777">...</span></div>
<div class="a" style="left:297px;top:597.46px;width:1432px;height:26.39px;background:#f6f6f6"></div>
<div class="a" style="left:297px;top:623.35px;width:1432px;height:1px;background:#e8e8e8"></div>
<div class="a" style="left:304px;top:604.16px;width:19px;height:14px;line-height:0"><svg width="19" height="14" viewBox="0 0 19 14"><rect x="1" y="1" width="17" height="12" rx="1" fill="#fff" stroke="#9a9a9a" stroke-width="1.6"/><path d="M4.5 4.3h10M4.5 7h10M4.5 9.7h10" stroke="#a6aab4" stroke-width="1.2"/></svg></div>
<div class="t" style="left:329.5px;top:604.85px;font-size:16.8px;transform:scaleX(0.9);color:#545454;">04.03.2024 15:30:11</div>
<div class="t" style="left:558.5px;top:604.85px;font-size:16.8px;transform:scaleX(0.9);color:#545454;">18.10.2023 0:00:00</div>
<div class="t" style="left:737.5px;top:604.85px;font-size:16.8px;transform:scaleX(0.9);color:#545454;">B00000000<span style="letter-spacing:-1.4px;color:#777">...</span></div>
<div class="t" style="left:839.5px;top:604.85px;font-size:16.8px;transform:scaleX(0.9);color:#545454;">20231018000022</div>
<div class="t" style="left:990.5px;top:604.85px;font-size:16.8px;transform:scaleX(0.9);color:#545454;">4383</div>
<div class="t" style="left:1142px;top:604.85px;font-size:16.8px;transform:scaleX(0.9);color:#545454;">Отклонен получ<span style="letter-spacing:-1.4px;color:#777">...</span></div>
<div class="t" style="left:1276px;top:604.85px;font-size:16.8px;transform:scaleX(0.9);color:#545454;">Отклонен</div>
<div class="t" style="left:1411px;top:604.85px;font-size:16.8px;transform:scaleX(0.9);color:#545454;">Первичный</div>
<div class="t" style="left:1546px;top:604.85px;font-size:16.8px;transform:scaleX(0.9);color:#545454;">Реализация от <span style="letter-spacing:-1.4px;color:#777">...</span></div>
<div class="a" style="left:297px;top:649.74px;width:1432px;height:1px;background:#e8e8e8"></div>
<div class="a" style="left:304px;top:630.55px;width:19px;height:14px;line-height:0"><svg width="19" height="14" viewBox="0 0 19 14"><rect x="1" y="1" width="17" height="12" rx="1" fill="#fff" stroke="#9a9a9a" stroke-width="1.6"/><path d="M4.5 4.3h10M4.5 7h10M4.5 9.7h10" stroke="#a6aab4" stroke-width="1.2"/></svg></div>
<div class="t" style="left:329.5px;top:631.24px;font-size:16.8px;transform:scaleX(0.9);color:#545454;">04.03.2024 15:30:12</div>
<div class="t" style="left:558.5px;top:631.24px;font-size:16.8px;transform:scaleX(0.9);color:#545454;">18.10.2023 0:00:00</div>
<div class="t" style="left:737.5px;top:631.24px;font-size:16.8px;transform:scaleX(0.9);color:#545454;">B00000000<span style="letter-spacing:-1.4px;color:#777">...</span></div>
<div class="t" style="left:839.5px;top:631.24px;font-size:16.8px;transform:scaleX(0.9);color:#545454;">20231018000007</div>
<div class="t" style="left:990.5px;top:631.24px;font-size:16.8px;transform:scaleX(0.9);color:#545454;">4368</div>
<div class="t" style="left:1142px;top:631.24px;font-size:16.8px;transform:scaleX(0.9);color:#545454;">Подтвержден п<span style="letter-spacing:-1.4px;color:#777">...</span></div>
<div class="t" style="left:1276px;top:631.24px;font-size:16.8px;transform:scaleX(0.9);color:#545454;">Принят</div>
<div class="t" style="left:1411px;top:631.24px;font-size:16.8px;transform:scaleX(0.9);color:#545454;">Первичный</div>
<div class="t" style="left:1546px;top:631.24px;font-size:16.8px;transform:scaleX(0.9);color:#545454;">Реализация от <span style="letter-spacing:-1.4px;color:#777">...</span></div>
<div class="a" style="left:297px;top:650.24px;width:1432px;height:26.39px;background:#f6f6f6"></div>
<div class="a" style="left:297px;top:676.13px;width:1432px;height:1px;background:#e8e8e8"></div>
<div class="a" style="left:304px;top:656.94px;width:19px;height:14px;line-height:0"><svg width="19" height="14" viewBox="0 0 19 14"><rect x="1" y="1" width="17" height="12" rx="1" fill="#fff" stroke="#9a9a9a" stroke-width="1.6"/><path d="M4.5 4.3h10M4.5 7h10M4.5 9.7h10" stroke="#a6aab4" stroke-width="1.2"/></svg></div>
<div class="t" style="left:329.5px;top:657.63px;font-size:16.8px;transform:scaleX(0.9);color:#545454;">04.03.2024 15:30:14</div>
<div class="t" style="left:558.5px;top:657.63px;font-size:16.8px;transform:scaleX(0.9);color:#545454;">18.10.2023 0:00:00</div>
<div class="t" style="left:737.5px;top:657.63px;font-size:16.8px;transform:scaleX(0.9);color:#545454;">B00000000<span style="letter-spacing:-1.4px;color:#777">...</span></div>
<div class="t" style="left:839.5px;top:657.63px;font-size:16.8px;transform:scaleX(0.9);color:#545454;">20231018000006</div>
<div class="t" style="left:990.5px;top:657.63px;font-size:16.8px;transform:scaleX(0.9);color:#545454;">4367</div>
<div class="t" style="left:1142px;top:657.63px;font-size:16.8px;transform:scaleX(0.9);color:#545454;">Подтвержден п<span style="letter-spacing:-1.4px;color:#777">...</span></div>
<div class="t" style="left:1276px;top:657.63px;font-size:16.8px;transform:scaleX(0.9);color:#545454;">Принят</div>
<div class="t" style="left:1411px;top:657.63px;font-size:16.8px;transform:scaleX(0.9);color:#545454;">Первичный</div>
<div class="t" style="left:1546px;top:657.63px;font-size:16.8px;transform:scaleX(0.9);color:#545454;">Реализация от <span style="letter-spacing:-1.4px;color:#777">...</span></div>
<div class="a" style="left:297px;top:702.52px;width:1432px;height:1px;background:#e8e8e8"></div>
<div class="a" style="left:304px;top:683.33px;width:19px;height:14px;line-height:0"><svg width="19" height="14" viewBox="0 0 19 14"><rect x="1" y="1" width="17" height="12" rx="1" fill="#fff" stroke="#9a9a9a" stroke-width="1.6"/><path d="M4.5 4.3h10M4.5 7h10M4.5 9.7h10" stroke="#a6aab4" stroke-width="1.2"/></svg></div>
<div class="t" style="left:329.5px;top:684.02px;font-size:16.8px;transform:scaleX(0.9);color:#545454;">04.03.2024 15:30:15</div>
<div class="t" style="left:558.5px;top:684.02px;font-size:16.8px;transform:scaleX(0.9);color:#545454;">17.10.2023 0:00:00</div>
<div class="t" style="left:737.5px;top:684.02px;font-size:16.8px;transform:scaleX(0.9);color:#545454;">B00000000<span style="letter-spacing:-1.4px;color:#777">...</span></div>
<div class="t" style="left:839.5px;top:684.02px;font-size:16.8px;transform:scaleX(0.9);color:#545454;">20231017000015</div>
<div class="t" style="left:990.5px;top:684.02px;font-size:16.8px;transform:scaleX(0.9);color:#545454;">4352</div>
<div class="t" style="left:1142px;top:684.02px;font-size:16.8px;transform:scaleX(0.9);color:#545454;">Подтвержден п<span style="letter-spacing:-1.4px;color:#777">...</span></div>
<div class="t" style="left:1276px;top:684.02px;font-size:16.8px;transform:scaleX(0.9);color:#545454;">Принят</div>
<div class="t" style="left:1411px;top:684.02px;font-size:16.8px;transform:scaleX(0.9);color:#545454;">Первичный</div>
<div class="t" style="left:1546px;top:684.02px;font-size:16.8px;transform:scaleX(0.9);color:#545454;">Реализация от <span style="letter-spacing:-1.4px;color:#777">...</span></div>
<div class="a" style="left:297px;top:703.02px;width:1432px;height:26.39px;background:#f6f6f6"></div>
<div class="a" style="left:297px;top:728.91px;width:1432px;height:1px;background:#e8e8e8"></div>
<div class="a" style="left:304px;top:709.72px;width:19px;height:14px;line-height:0"><svg width="19" height="14" viewBox="0 0 19 14"><rect x="1" y="1" width="17" height="12" rx="1" fill="#fff" stroke="#9a9a9a" stroke-width="1.6"/><path d="M4.5 4.3h10M4.5 7h10M4.5 9.7h10" stroke="#a6aab4" stroke-width="1.2"/></svg></div>
<div class="t" style="left:329.5px;top:710.41px;font-size:16.8px;transform:scaleX(0.9);color:#545454;">04.03.2024 15:30:16</div>
<div class="t" style="left:558.5px;top:710.41px;font-size:16.8px;transform:scaleX(0.9);color:#545454;">16.10.2023 0:00:00</div>
<div class="t" style="left:737.5px;top:710.41px;font-size:16.8px;transform:scaleX(0.9);color:#545454;">B00000000<span style="letter-spacing:-1.4px;color:#777">...</span></div>
<div class="t" style="left:839.5px;top:710.41px;font-size:16.8px;transform:scaleX(0.9);color:#545454;">20231016000014</div>
<div class="t" style="left:990.5px;top:710.41px;font-size:16.8px;transform:scaleX(0.9);color:#545454;">4324</div>
<div class="t" style="left:1142px;top:710.41px;font-size:16.8px;transform:scaleX(0.9);color:#545454;">Подтвержден п<span style="letter-spacing:-1.4px;color:#777">...</span></div>
<div class="t" style="left:1276px;top:710.41px;font-size:16.8px;transform:scaleX(0.9);color:#545454;">Принят</div>
<div class="t" style="left:1411px;top:710.41px;font-size:16.8px;transform:scaleX(0.9);color:#545454;">Первичный</div>
<div class="t" style="left:1546px;top:710.41px;font-size:16.8px;transform:scaleX(0.9);color:#545454;">Реализация от <span style="letter-spacing:-1.4px;color:#777">...</span></div>
<div class="a" style="left:297px;top:755.30px;width:1432px;height:1px;background:#e8e8e8"></div>
<div class="a" style="left:304px;top:736.11px;width:19px;height:14px;line-height:0"><svg width="19" height="14" viewBox="0 0 19 14"><rect x="1" y="1" width="17" height="12" rx="1" fill="#fff" stroke="#9a9a9a" stroke-width="1.6"/><path d="M4.5 4.3h10M4.5 7h10M4.5 9.7h10" stroke="#a6aab4" stroke-width="1.2"/></svg></div>
<div class="t" style="left:329.5px;top:736.80px;font-size:16.8px;transform:scaleX(0.9);color:#545454;">04.03.2024 15:30:17</div>
<div class="t" style="left:558.5px;top:736.80px;font-size:16.8px;transform:scaleX(0.9);color:#545454;">16.10.2023 0:00:00</div>
<div class="t" style="left:737.5px;top:736.80px;font-size:16.8px;transform:scaleX(0.9);color:#545454;">B00000000<span style="letter-spacing:-1.4px;color:#777">...</span></div>
<div class="t" style="left:839.5px;top:736.80px;font-size:16.8px;transform:scaleX(0.9);color:#545454;">20231016000012</div>
<div class="t" style="left:990.5px;top:736.80px;font-size:16.8px;transform:scaleX(0.9);color:#545454;">4322</div>
<div class="t" style="left:1142px;top:736.80px;font-size:16.8px;transform:scaleX(0.9);color:#545454;">Подтвержден п<span style="letter-spacing:-1.4px;color:#777">...</span></div>
<div class="t" style="left:1276px;top:736.80px;font-size:16.8px;transform:scaleX(0.9);color:#545454;">Принят</div>
<div class="t" style="left:1411px;top:736.80px;font-size:16.8px;transform:scaleX(0.9);color:#545454;">Первичный</div>
<div class="t" style="left:1546px;top:736.80px;font-size:16.8px;transform:scaleX(0.9);color:#545454;">Реализация от <span style="letter-spacing:-1.4px;color:#777">...</span></div>
<div class="a" style="left:297px;top:755.80px;width:1432px;height:26.39px;background:#f6f6f6"></div>
<div class="a" style="left:297px;top:781.69px;width:1432px;height:1px;background:#e8e8e8"></div>
<div class="a" style="left:304px;top:762.50px;width:19px;height:14px;line-height:0"><svg width="19" height="14" viewBox="0 0 19 14"><rect x="1" y="1" width="17" height="12" rx="1" fill="#fff" stroke="#9a9a9a" stroke-width="1.6"/><path d="M4.5 4.3h10M4.5 7h10M4.5 9.7h10" stroke="#a6aab4" stroke-width="1.2"/></svg></div>
<div class="t" style="left:329.5px;top:763.19px;font-size:16.8px;transform:scaleX(0.9);color:#545454;">04.03.2024 15:30:18</div>
<div class="t" style="left:558.5px;top:763.19px;font-size:16.8px;transform:scaleX(0.9);color:#545454;">16.10.2023 0:00:00</div>
<div class="t" style="left:737.5px;top:763.19px;font-size:16.8px;transform:scaleX(0.9);color:#545454;">B00000000<span style="letter-spacing:-1.4px;color:#777">...</span></div>
<div class="t" style="left:839.5px;top:763.19px;font-size:16.8px;transform:scaleX(0.9);color:#545454;">20231016000011</div>
<div class="t" style="left:990.5px;top:763.19px;font-size:16.8px;transform:scaleX(0.9);color:#545454;">4321</div>
<div class="t" style="left:1142px;top:763.19px;font-size:16.8px;transform:scaleX(0.9);color:#545454;">Подтвержден п<span style="letter-spacing:-1.4px;color:#777">...</span></div>
<div class="t" style="left:1276px;top:763.19px;font-size:16.8px;transform:scaleX(0.9);color:#545454;">Принят</div>
<div class="t" style="left:1411px;top:763.19px;font-size:16.8px;transform:scaleX(0.9);color:#545454;">Первичный</div>
<div class="t" style="left:1546px;top:763.19px;font-size:16.8px;transform:scaleX(0.9);color:#545454;">Реализация от <span style="letter-spacing:-1.4px;color:#777">...</span></div>
<div class="a" style="left:297px;top:808.08px;width:1432px;height:1px;background:#e8e8e8"></div>
<div class="a" style="left:304px;top:788.89px;width:19px;height:14px;line-height:0"><svg width="19" height="14" viewBox="0 0 19 14"><rect x="1" y="1" width="17" height="12" rx="1" fill="#fff" stroke="#9a9a9a" stroke-width="1.6"/><path d="M4.5 4.3h10M4.5 7h10M4.5 9.7h10" stroke="#a6aab4" stroke-width="1.2"/></svg></div>
<div class="t" style="left:329.5px;top:789.58px;font-size:16.8px;transform:scaleX(0.9);color:#545454;">04.03.2024 15:30:19</div>
<div class="t" style="left:558.5px;top:789.58px;font-size:16.8px;transform:scaleX(0.9);color:#545454;">05.10.2023 0:00:00</div>
<div class="t" style="left:737.5px;top:789.58px;font-size:16.8px;transform:scaleX(0.9);color:#545454;">B00000000<span style="letter-spacing:-1.4px;color:#777">...</span></div>
<div class="t" style="left:839.5px;top:789.58px;font-size:16.8px;transform:scaleX(0.9);color:#545454;">20231005000019</div>
<div class="t" style="left:990.5px;top:789.58px;font-size:16.8px;transform:scaleX(0.9);color:#545454;">4183</div>
<div class="t" style="left:1142px;top:789.58px;font-size:16.8px;transform:scaleX(0.9);color:#545454;">Подтвержден п<span style="letter-spacing:-1.4px;color:#777">...</span></div>
<div class="t" style="left:1276px;top:789.58px;font-size:16.8px;transform:scaleX(0.9);color:#545454;">Принят</div>
<div class="t" style="left:1411px;top:789.58px;font-size:16.8px;transform:scaleX(0.9);color:#545454;">Первичный</div>
<div class="t" style="left:1546px;top:789.58px;font-size:16.8px;transform:scaleX(0.9);color:#545454;">Реализация от <span style="letter-spacing:-1.4px;color:#777">...</span></div>
<div class="a" style="left:297px;top:808.58px;width:1432px;height:26.39px;background:#f6f6f6"></div>
<div class="a" style="left:297px;top:834.47px;width:1432px;height:1px;background:#e8e8e8"></div>
<div class="a" style="left:304px;top:815.28px;width:19px;height:14px;line-height:0"><svg width="19" height="14" viewBox="0 0 19 14"><rect x="1" y="1" width="17" height="12" rx="1" fill="#fff" stroke="#9a9a9a" stroke-width="1.6"/><path d="M4.5 4.3h10M4.5 7h10M4.5 9.7h10" stroke="#a6aab4" stroke-width="1.2"/></svg></div>
<div class="t" style="left:329.5px;top:815.97px;font-size:16.8px;transform:scaleX(0.9);color:#545454;">04.03.2024 15:30:20</div>
<div class="t" style="left:558.5px;top:815.97px;font-size:16.8px;transform:scaleX(0.9);color:#545454;">04.10.2023 0:00:00</div>
<div class="t" style="left:737.5px;top:815.97px;font-size:16.8px;transform:scaleX(0.9);color:#545454;">B00000000<span style="letter-spacing:-1.4px;color:#777">...</span></div>
<div class="t" style="left:839.5px;top:815.97px;font-size:16.8px;transform:scaleX(0.9);color:#545454;">20231004000022</div>
<div class="t" style="left:990.5px;top:815.97px;font-size:16.8px;transform:scaleX(0.9);color:#545454;">4163</div>
<div class="t" style="left:1142px;top:815.97px;font-size:16.8px;transform:scaleX(0.9);color:#545454;">Подтвержден п<span style="letter-spacing:-1.4px;color:#777">...</span></div>
<div class="t" style="left:1276px;top:815.97px;font-size:16.8px;transform:scaleX(0.9);color:#545454;">Принят</div>
<div class="t" style="left:1411px;top:815.97px;font-size:16.8px;transform:scaleX(0.9);color:#545454;">Первичный</div>
<div class="t" style="left:1546px;top:815.97px;font-size:16.8px;transform:scaleX(0.9);color:#545454;">Реализация от <span style="letter-spacing:-1.4px;color:#777">...</span></div>
<div class="a" style="left:297px;top:860.86px;width:1432px;height:1px;background:#e8e8e8"></div>
<div class="a" style="left:304px;top:841.67px;width:19px;height:14px;line-height:0"><svg width="19" height="14" viewBox="0 0 19 14"><rect x="1" y="1" width="17" height="12" rx="1" fill="#fff" stroke="#9a9a9a" stroke-width="1.6"/><path d="M4.5 4.3h10M4.5 7h10M4.5 9.7h10" stroke="#a6aab4" stroke-width="1.2"/></svg></div>
<div class="t" style="left:329.5px;top:842.36px;font-size:16.8px;transform:scaleX(0.9);color:#545454;">04.03.2024 15:30:21</div>
<div class="t" style="left:558.5px;top:842.36px;font-size:16.8px;transform:scaleX(0.9);color:#545454;">04.10.2023 0:00:00</div>
<div class="t" style="left:737.5px;top:842.36px;font-size:16.8px;transform:scaleX(0.9);color:#545454;">B00000000<span style="letter-spacing:-1.4px;color:#777">...</span></div>
<div class="t" style="left:839.5px;top:842.36px;font-size:16.8px;transform:scaleX(0.9);color:#545454;">20231004000021</div>
<div class="t" style="left:990.5px;top:842.36px;font-size:16.8px;transform:scaleX(0.9);color:#545454;">4162</div>
<div class="t" style="left:1142px;top:842.36px;font-size:16.8px;transform:scaleX(0.9);color:#545454;">Подтвержден п<span style="letter-spacing:-1.4px;color:#777">...</span></div>
<div class="t" style="left:1276px;top:842.36px;font-size:16.8px;transform:scaleX(0.9);color:#545454;">Принят</div>
<div class="t" style="left:1411px;top:842.36px;font-size:16.8px;transform:scaleX(0.9);color:#545454;">Первичный</div>
<div class="t" style="left:1546px;top:842.36px;font-size:16.8px;transform:scaleX(0.9);color:#545454;">Реализация от <span style="letter-spacing:-1.4px;color:#777">...</span></div>
<div class="a" style="left:330px;top:957px;width:1206px;height:11px;border-radius:6px;background:#d6d6d6"></div>
<div class="a" style="left:330px;top:957px;width:1047px;height:11px;border-radius:6px;background:#939393"></div>
<svg class="a" style="left:309px;top:958px" width="8" height="10" viewBox="0 0 8 10"><path d="M6 1L1 5L6 9z" fill="#c8c8c8"/></svg>
<svg class="a" style="left:1549px;top:958px" width="8" height="10" viewBox="0 0 8 10"><path d="M2 1.4L6.4 5L2 8.6z" fill="#404040"/></svg>
<div class="a" style="left:1595px;top:948px;width:135px;height:31px;border:2px solid #cbcbcb;background:#fff"></div>
<div class="a" style="left:1628px;top:949px;width:2px;height:29px;background:#cbcbcb"></div>
<div class="a" style="left:1661.5px;top:949px;width:2px;height:29px;background:#cbcbcb"></div>
<div class="a" style="left:1695px;top:949px;width:2px;height:29px;background:#cbcbcb"></div>
<svg class="a" style="left:0;top:0;overflow:visible" width="1" height="1"><g fill="#a9a9a9"><rect x="1606.5" y="959.4" width="11.5" height="1.4"/><path d="M1612.2 961 L1618 967.3 H1606.5 Z"/><path d="M1645.3 960.8 L1651 967.3 H1639.7 Z"/><path d="M1672.5 961.4 H1684.3 L1678.4 967.8 Z"/><path d="M1705.8 961 H1717.6 L1711.7 966.8 Z"/><rect x="1705.8" y="967.8" width="11.8" height="1.3"/></g></svg>
<div class="a" style="left:3px;top:996px;width:1752px;height:44px;background:#b1b1b1;border-top:1.5px solid #a4a4a4"></div>
<div class="a" style="left:3px;top:1040px;width:1757px;height:3px;background:#cdc5a0"></div>
<div class="a" style="left:12px;top:1005px;width:31px;height:28px;background:#fafafa;border-radius:3px"></div>
<svg class="a" style="left:16px;top:1009px" width="26" height="22" viewBox="0 0 26 22"><g fill="none" stroke="#555" stroke-width="1.8"><rect x="9" y="2" width="14" height="9" rx="2"/><rect x="2" y="7" width="15" height="10" rx="2" fill="#fafafa"/></g><rect x="7.5" y="18" width="4" height="2" fill="#555"/></svg>
<div class="t" style="left:51px;top:1005.73px;font-size:19px;transform:scaleX(0.935);color:#e8323c;-webkit-text-stroke:0.5px #e8323c">Текущие вызовы: 1</div>
<div class="t" style="left:228.5px;top:1005.73px;font-size:19px;transform:scaleX(0.93);color:#e8323c;-webkit-text-stroke:0.5px #e8323c">Накопленные вызовы: 589</div>
</body></html>
